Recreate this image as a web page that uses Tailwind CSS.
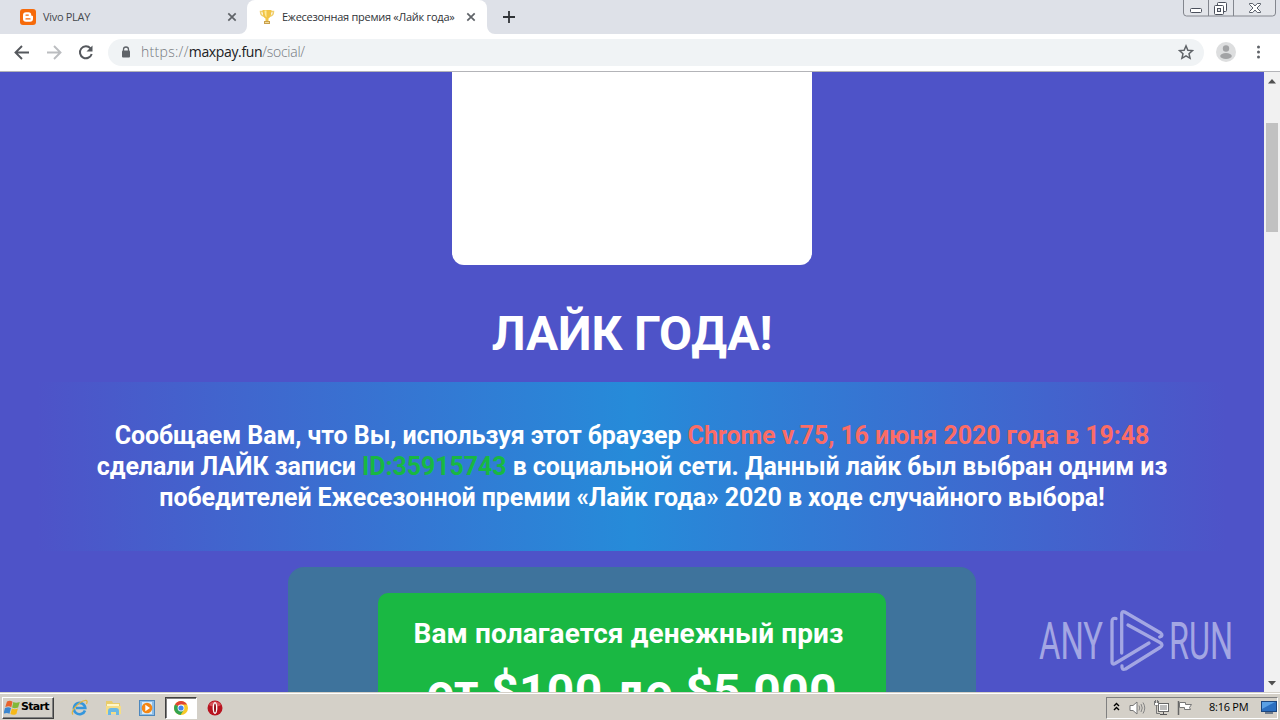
<!DOCTYPE html>
<html lang="ru">
<head>
    <meta charset="UTF-8">
    <title>Ежесезонная премия «Лайк года»</title>
    <script src="https://cdn.jsdelivr.net/npm/@tailwindcss/browser@4"></script>
</head>
<body class="w-[1280px] h-[720px] overflow-hidden flex flex-col bg-white font-['Open_Sans',sans-serif]">

    <!-- Tab strip -->
    <div class="relative h-[34px] shrink-0 flex items-center bg-[#dee1e8]">
        <div class="w-[247px] h-full flex items-center pl-5 pr-[10px]">
            <svg class="w-4 h-4 shrink-0" viewBox="0 0 16 16">
                <rect width="16" height="16" rx="3" fill="#f66a0a"/>
                <path d="M6 3.2h2.600a2.600 2.600 0 0 1 2.600 2.600c0 .8.3 1 1 1 .5 0 .8.3.8.8v2.200a3 3 0 0 1-3 3H6a3 3 0 0 1-3-3V6.200a3 3 0 0 1 3-3z" fill="#fff"/>
                <path d="M6 6.100h2.300M6 9.900h4" stroke="#f66a0a" stroke-width="1.300" stroke-linecap="round"/>
            </svg>
            <span class="ml-[7px] text-[11px] tracking-[-0.3px] text-[#45484d]">Vivo PLAY</span>
            <svg class="ml-auto w-[10px] h-[10px]" viewBox="0 0 10 10"><path d="M1.300 1.300l7.400 7.400M8.700 1.300L1.300 8.700" stroke="#5f6368" stroke-width="1.700"/></svg>
        </div>
        <div class="w-[240px] h-full flex items-center bg-white rounded-t-lg pl-3 pr-[11px]">
            <svg class="w-4 h-4 shrink-0" viewBox="0 0 16 16">
                <path d="M4.500 2.500h-3c0 3 1 4.500 4.500 5M11.500 2.500h3c0 3-1 4.500-4.500 5" fill="none" stroke="#f0cf70" stroke-width="1.500"/>
                <path d="M3.500 1h9c0 5-1.200 7.500-3 8.500v3h-3v-3C4.700 8.500 3.500 6 3.500 1z" fill="#f2c546"/>
                <path d="M5.500 1.500h2v7c-1.300-1-2-3.500-2-7z" fill="#fdeb9b"/>
                <path d="M5 12h6v3H5z" fill="#c9a04c"/>
                <path d="M6 13h4v1H6z" fill="#f1dc9c"/>
            </svg>
            <span class="ml-[7px] text-[11px] tracking-[-0.27px] whitespace-nowrap text-[#303337]">Ежесезонная премия «Лайк года»</span>
            <svg class="ml-auto w-[10px] h-[10px] shrink-0" viewBox="0 0 10 10"><path d="M1.300 1.300l7.400 7.400M8.700 1.300L1.300 8.700" stroke="#5f6368" stroke-width="1.700"/></svg>
        </div>
        <!-- Curved feet of the active tab -->
        <svg class="absolute left-[239px] bottom-0 w-2 h-2" viewBox="0 0 8 8"><path d="M8 0v8H0a8 8 0 0 0 8-8z" fill="#fff"/></svg>
        <svg class="absolute left-[487px] bottom-0 w-2 h-2" viewBox="0 0 8 8"><path d="M0 0v8h8a8 8 0 0 1-8-8z" fill="#fff"/></svg>
        <svg class="ml-4 w-3 h-3" viewBox="0 0 12 12"><path d="M6 0v12M0 6h12" stroke="#303337" stroke-width="1.800"/></svg>

        <!-- Window buttons -->
        <svg class="ml-auto mr-[4px] self-start w-[94px] h-[17px]" viewBox="0 0 94 17">
            <path d="M1.500 0v13a3 3 0 0 0 3 3h86a3 3 0 0 0 3-3V0M26.500 0v16M51.500 0v16" fill="#e3e5ea" stroke="#83868e"/>
            <rect x="8.500" y="8.500" width="11" height="4" rx="1" fill="#fff" stroke="#4b505c"/>
            <rect x="35.500" y="2.500" width="9" height="9" rx="1" fill="#fff" stroke="#4b505c"/>
            <rect x="32.500" y="5.500" width="9" height="9" rx="1" fill="#fff" stroke="#4b505c"/>
            <rect x="35.500" y="8.500" width="3" height="3" fill="#e3e5ea" stroke="#4b505c"/>
            <path d="M67.500 3.500h3.200L73 6l2.300-2.500h3.200v1L75 8l3.500 3.500v1h-3.200L73 10l-2.300 2.500h-3.200v-1L71 8l-3.500-3.500z" fill="#fff" stroke="#4b505c" stroke-width=".9"/>
        </svg>
    </div>

    <!-- Toolbar -->
    <div class="h-[38px] shrink-0 flex items-center bg-white border-b border-[#b3b4b8] pr-[16px] pl-[14px]">
        <svg class="w-4 h-4" viewBox="0 0 16 16"><path d="M15 7.500H2M8 1L1.500 7.500 8 14" fill="none" stroke="#55585d" stroke-width="1.900"/></svg>
        <svg class="ml-4 w-4 h-4" viewBox="0 0 16 16"><path d="M1 7.500h13M8 1l6.500 6.500L8 14" fill="none" stroke="#bbbdc0" stroke-width="1.900"/></svg>
        <svg class="ml-4 w-4 h-4" viewBox="0 0 16 16"><path d="M12.500 3.300A6 6 0 1 0 13.700 9" fill="none" stroke="#55585d" stroke-width="2"/><path d="M14.500 .5v6h-6z" fill="#55585d"/></svg>
        <div class="ml-[14px] w-[1096px] h-[27px] rounded-full bg-[#f0f3f5] flex items-center pl-[13px] pr-[10px]">
            <svg class="w-[10px] h-[13px] shrink-0" viewBox="0 0 10 13"><path d="M2.500 5.500V3.500a2.500 2.500 0 0 1 5 0v2" fill="none" stroke="#5f6368" stroke-width="1.300"/><rect x="1" y="4.500" width="8" height="7" rx="1" fill="#5f6368"/></svg>
            <span class="ml-[10px] mt-[-2px] text-[14px] tracking-[-0.27px] text-[#74787d] font-light"><span class="tracking-[0.3px]">https://</span><span class="text-[#202124] font-normal tracking-[-0.35px]">maxpay.fun</span>/social/</span>
            <svg class="ml-auto mt-[-1px] w-4 h-4" viewBox="0 0 24 24"><path d="M12 2.800l2.800 6.500 7 .6-5.300 4.600 1.600 6.900-6.100-3.700-6.100 3.700 1.600-6.900-5.300-4.600 7-.6z" fill="none" stroke="#5f6368" stroke-width="2.200"/></svg>
        </div>
        <svg class="ml-[12px] mt-[-2px] w-5 h-5" viewBox="0 0 20 20"><circle cx="10" cy="10" r="10" fill="#dddedf"/><circle cx="10" cy="6.500" r="3.200" fill="#a2a3a5"/><ellipse cx="10" cy="14" rx="5.800" ry="3" fill="#a2a3a5"/></svg>
        <svg class="ml-auto mr-[4px] mt-[-1px] w-[4px] h-[14px]" viewBox="0 0 4 14"><circle cx="2.500" cy="2" r="1.500" fill="#5f6368"/><circle cx="2.500" cy="7" r="1.500" fill="#5f6368"/><circle cx="2.500" cy="12" r="1.500" fill="#5f6368"/></svg>
    </div>

    <!-- Page -->
    <div class="h-[620px] shrink-0 flex overflow-hidden">
        <main class="relative w-[1264px] h-full overflow-hidden flex flex-col items-center bg-[#4e53c8] font-[Roboto,sans-serif] text-white font-bold">
            <div class="w-[360px] h-[193px] shrink-0 bg-white rounded-b-xl"></div>
            <h1 class="mt-[41px] h-[56px] shrink-0 text-[48px] leading-[56px] tracking-[-0.15px] whitespace-nowrap">ЛАЙК ГОДА!</h1>
            <section class="mt-[20px] h-[169px] w-full shrink-0 flex flex-col items-center pt-[38px] text-[25px] leading-[31px] tracking-[-0.08px] whitespace-nowrap bg-[linear-gradient(90deg,#4e53c8_3%,#268bd9_50%,#4e53c8_97%)]">
                <p>Сообщаем Вам, что Вы, используя этот браузер <span class="text-[#fb6c66]">Chrome v.75, 16 июня 2020 года в 19:48</span></p>
                <p>сделали ЛАЙК записи <span class="text-[#18b842]">ID:35915743</span> в социальной сети. Данный лайк был выбран одним из</p>
                <p>победителей Ежесезонной премии «Лайк года» 2020 в ходе случайного выбора!</p>
            </section>
            <div class="mt-4 w-[688px] h-[300px] shrink-0 rounded-t-2xl bg-[#3e739c] flex flex-col items-center pt-[26px]">
                <div class="w-[508px] h-[250px] rounded-t-[10px] bg-[#1ab843] flex flex-col items-center pt-[24px] whitespace-nowrap">
                    <p class="mr-[7px] text-[28px] leading-[34px] tracking-[0.1px]">Вам полагается денежный приз</p>
                    <p class="mt-[12px] text-[48px] leading-[58px] tracking-[0.35px]">от $100 до $5 000</p>
                </div>
            </div>

            <!-- Watermark -->
            <svg class="absolute left-[1030px] top-[533px] w-[210px] h-[72px] overflow-visible text-[#a3a6e3]" viewBox="0 0 210 72" fill="currentColor">
                <text x="9" y="54" font-size="51" font-weight="400" textLength="64" lengthAdjust="spacingAndGlyphs">ANY</text>
                <text x="139" y="54" font-size="51" font-weight="400" textLength="64" lengthAdjust="spacingAndGlyphs">RUN</text>
                <g fill="none" stroke="currentColor" stroke-width="3.300" stroke-linejoin="round" stroke-linecap="round">
                    <path d="M86 13.500q-4-1-4 3V57q0 3 3 1.500L119 38"/>
                    <path d="M91.700 48V9q0-3.500 3-2l36 21q3 2.500-1 4"/>
                    <path d="M98 20l32 17.500q4 2.500 0 5L95.500 64q-4 1.500-3.500-3"/>
                </g>
            </svg>
        </main>

        <!-- Scrollbar -->
        <div class="w-4 h-full bg-[#f1f1f1] flex flex-col items-center">
            <svg class="mt-[7px] w-[9px] h-[5px] shrink-0" viewBox="0 0 9 5"><path d="M0 4.500h8L4 0z" fill="#505050"/></svg>
            <div class="mt-[39px] w-3 h-[109px] bg-[#c1c1c1]"></div>
            <svg class="mt-auto mb-[6px] w-[9px] h-[5px] shrink-0" viewBox="0 0 9 5"><path d="M0 0h8L4 4.500z" fill="#505050"/></svg>
        </div>
    </div>

    <!-- Taskbar -->
    <div class="h-7 shrink-0 flex items-center bg-[#d4d0c8] border-t border-[#d4d0c8] shadow-[inset_0_1px_0_#fff] pt-[2px] pl-[2px] pr-[2px]">
        <div class="w-[52px] h-[22px] flex items-center border border-t-white border-l-white border-r-[#404040] border-b-[#404040] shadow-[inset_-1px_-1px_0_#808080] pl-[1px]">
            <svg class="w-4 h-4 shrink-0" viewBox="0 0 16 16">
                <path d="M3 1.500c2-1.200 4-1 5.500.2L7.300 7.200c-1.700-1.200-3.500-1.200-6-.1z" fill="#e8622c"/>
                <path d="M9.300 2c1.700 1 3.800 1 6.500 0l-1.700 5.500c-2.500 1-4.500 1-6 0z" fill="#82b83a"/>
                <path d="M1 8c2.500-1 4.500-.8 6 .1l-1.500 5.700c-1.800-1.200-3.600-1.200-6-.1z" fill="#3c86cf"/>
                <path d="M7.900 8.500c1.700 1 3.800 1 6 0l-1.500 5.500c-2.400 1.200-4.400 1-6 0z" fill="#f7b918"/>
            </svg>
            <span class="ml-[1px] text-[11px] font-bold text-black font-['DejaVu_Sans',sans-serif] tracking-[-0.7px]">Start</span>
        </div>
        <svg class="ml-[17px] w-[17px] h-[17px]" viewBox="0 0 17 17">
            <path d="M14 11.500A5.700 5.700 0 1 1 14.300 9H5" fill="none" stroke="#3596dc" stroke-width="2.600"/>
            <path d="M2 15.500C-1 13 7 3 14 1.500c2.500-.5 2.500 1.500 1.500 3.500" fill="none" stroke="#e3b43c" stroke-width="1.200"/>
        </svg>
        <svg class="ml-[17px] w-[17px] h-[17px]" viewBox="0 0 17 17">
            <path d="M1 2h6l1 2h7v11H1z" fill="#e9cc6a"/><path d="M2 5h12v3H2z" fill="#fff6c8"/><path d="M1 7h15v8H1z" fill="#f5dd86"/>
            <path d="M3 16v-4c0-2 1-3 3-3h5c2 0 3 1 3 3v4h-3v-3H6v3z" fill="#6bb8e4"/>
        </svg>
        <svg class="ml-[17px] w-4 h-4" viewBox="0 0 16 16">
            <rect x=".5" y=".5" width="15" height="15" fill="#8dbde6" stroke="#4d87bd"/><rect x="3" y="2" width="10" height="12" fill="#d8ebf8"/>
            <circle cx="8" cy="8" r="5.300" fill="#f58613"/><path d="M6.300 4.800v6.400L11 8z" fill="#fff"/>
        </svg>
        <div class="ml-[10px] w-8 h-[22px] flex items-center justify-center bg-white border border-t-[#404040] border-l-[#404040] border-r-white border-b-white shadow-[inset_1px_1px_0_#808080]">
            <svg class="w-[14px] h-[14px]" viewBox="0 0 14 14">
                <circle cx="7" cy="7" r="7" fill="#f7c928"/>
                <path d="M7 7L1 3.500A7 7 0 0 1 13 3.500H7z" fill="#e04335"/>
                <path d="M1 3.500A7 7 0 0 0 6.500 14L10 8.700 7 7z" fill="#32a350"/>
                <circle cx="7" cy="7" r="3.400" fill="#fff"/><circle cx="7" cy="7" r="2.600" fill="#4385ee"/>
            </svg>
        </div>
        <svg class="ml-[10px] w-4 h-4" viewBox="0 0 16 16"><circle cx="8" cy="8" r="7.500" fill="#b81420"/><path d="M2 5a7 7 0 0 1 12 0c-3 2-9 2-12 0z" fill="#d8545a"/><ellipse cx="8" cy="8" rx="2.400" ry="6" fill="#fff"/><ellipse cx="8" cy="8" rx="1" ry="4.600" fill="#8e1119"/></svg>

        <!-- Tray -->
        <div class="ml-auto w-[172px] h-[22px] flex items-center border border-t-[#808080] border-l-[#808080] border-r-white border-b-white pl-[6px]">
            <svg class="mt-[-3px] w-[7px] h-[9px]" viewBox="0 0 7 9"><path d="M1 4l2.500-2.500L6 4M1 8l2.500-2.500L6 8" fill="none" stroke="#000" stroke-width="1.400"/></svg>
            <svg class="ml-[9px] w-[17px] h-4" viewBox="0 0 17 16"><path d="M1 5.500h3L8 2v12l-4-3.500H1z" fill="#fff" stroke="#777"/><path d="M10 5.500q1.500 2.500 0 5M12 4q2.500 4 0 8M14 2.500q3.500 5.500 0 11" fill="none" stroke="#858585"/></svg>
            <svg class="ml-[7px] w-4 h-4" viewBox="0 0 16 16"><rect x="5.500" y="3.500" width="10" height="8" fill="#bbb" stroke="#666"/><rect x="6.500" y="4.500" width="8" height="6" fill="none" stroke="#fff"/><path d="M7 14.500h7M10.500 12v2" stroke="#555"/><path d="M1.500 1v4h4V1M3.500 5v8.500H7M2.500 0v3M4.500 0v3" fill="none" stroke="#777"/><rect x="2" y="3" width="3" height="2" fill="#fff"/></svg>
            <svg class="ml-[8px] w-4 h-4" viewBox="0 0 16 16"><path d="M1.500 1v14" stroke="#666" stroke-width="1.500"/><path d="M2.500 2.500h6v2h6l-2 3 1 2h-6v-2h-5z" fill="#fff" stroke="#777"/></svg>
            <span class="ml-[16px] text-[11px] text-black tracking-[-0.25px] whitespace-nowrap">8:16 PM</span>
            <svg class="ml-auto mt-[-2px] w-4 h-[14px]" viewBox="0 0 16 14"><rect x=".5" y="1.500" width="15" height="10" fill="#2b6fc0" stroke="#1b467e"/><path d="M1 2h13L1 9z" fill="#5aa0e4"/><path d="M4 13h8" stroke="#4d5f78" stroke-width="1.500"/></svg>
        </div>
    </div>
</body>
</html>
